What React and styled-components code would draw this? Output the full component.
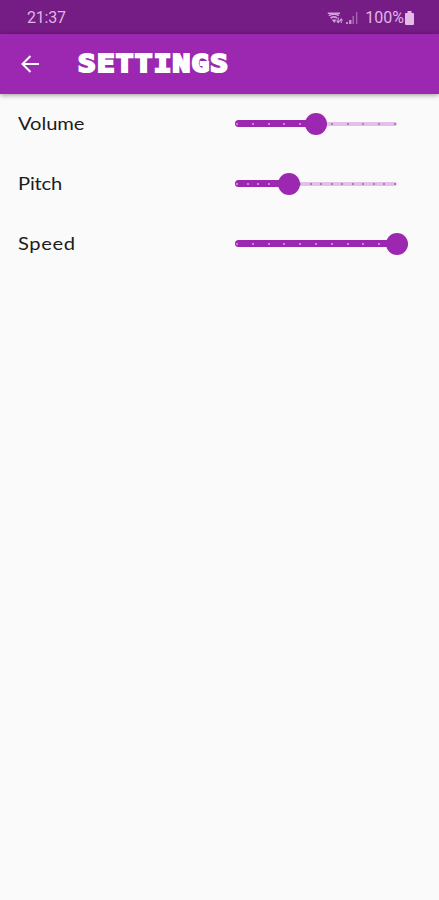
import React from 'react';
import styled, { createGlobalStyle } from 'styled-components';

const GlobalStyle = createGlobalStyle`
  body {
    margin: 0;
    background: #fafafa;
  }
`;

const Screen = styled.div`
  min-height: 900px;
  background: #fafafa;
  overflow: hidden;
`;

const StatusBar = styled.div`
  display: flex;
  justify-content: space-between;
  align-items: center;
  box-sizing: border-box;
  height: 34px;
  padding: 1px 25px 0 27px;
  background: #751c85;
  color: #dfb5e5;
  font: 16px/33px Roboto, sans-serif;
`;

const Clock = styled.span`
  letter-spacing: -0.2px;
`;

const StatusIcons = styled.div`
  display: flex;
  align-items: center;
`;

const Battery = styled.span`
  margin: 0 1px 0 6px;
`;

const AppBar = styled.header`
  display: flex;
  align-items: center;
  height: 60px;
  padding-left: 20px;
  background: #9c27b0;
  box-shadow: 0 1px 5px rgba(0, 0, 0, 0.4);
`;

const Title = styled.h1`
  margin: 0 0 0 38px;
  color: #fff;
  font: bold 24px/60px "DejaVu Sans Mono", monospace;
  letter-spacing: 1.05px;
  -webkit-text-stroke: 2.2px #fff;
  transform: scaleX(1.22);
  transform-origin: left;
`;

const List = styled.main`
  padding: 0 42px 0 18px;
`;

const Row = styled.div`
  display: flex;
  justify-content: space-between;
  align-items: center;
  height: 60px;
`;

const Label = styled.span`
  height: 60px;
  color: #1c1c1c;
  font: 18px/58px Lato, sans-serif;
  letter-spacing: ${({ $spacing }) => $spacing}px;
  transform: scaleX(1.12);
  transform-origin: left;
`;

const Slider = styled.div`
  position: relative;
  display: flex;
  align-items: center;
  width: 162px;
  height: 22px;
  margin-bottom: 1px;
`;

const Track = styled.div`
  flex: 1;
  height: 4px;
  border-radius: 2px;
  background: #e3c0e8;
`;

const ActiveTrack = styled.div`
  position: absolute;
  left: 0;
  height: 7px;
  border-radius: 4px;
  background: #9c27b0;
`;

const Ticks = styled.div`
  position: absolute;
  left: 1px;
  right: 1px;
  display: flex;
  justify-content: space-between;
`;

const Tick = styled.i`
  width: 2px;
  height: 2px;
  border-radius: 1px;
  background: ${({ $active }) => ($active ? '#d9a5e0' : '#a865b3')};
`;

const Thumb = styled.div`
  position: absolute;
  width: 22px;
  height: 22px;
  margin-left: -11px;
  border-radius: 50%;
  background: #9c27b0;
`;

const settings = [
  { label: 'Volume', value: 5, max: 10, spacing: -0.05 },
  { label: 'Pitch', value: 5, max: 15, spacing: -0.15 },
  { label: 'Speed', value: 10, max: 10, spacing: 0.55 },
];

const BackIcon = () => (
  <svg width="20" height="20" viewBox="0 0 20 20" fill="none" stroke="#fff" strokeWidth="2">
    <path d="M19 10H3M10.5 2 2.5 10l8 8" />
  </svg>
);

const WifiIcon = () => (
  <svg width="18" height="14" viewBox="0 0 18 14" fill="none" stroke="#d2a0da" strokeWidth="1.6">
    <path d="M.8 2.2H13M1.8 4.6Q7 1.6 12 4.6M3.5 7Q7 4.8 10 7" />
    <path d="M4.500 8.500 7.500 12l2-3.500z" fill="#d2a0da" stroke="none" />
    <path d="M11.200 6.500v5M9.600 9.700l1.600 2 1.600-2M14.200 12V8M12.900 9.500l1.300-1.600 1.300 1.600" strokeWidth="1.1" />
  </svg>
);

const SignalIcon = () => (
  <svg width="14" height="14" viewBox="0 0 14 14" fill="#c48dcc">
    <path d="M1 11h2v2H1zM4 9h2.500v4H4z" />
    <path d="M7.500 5h1.500v8H7.500zM11 1h1.300v12H11z" opacity=".65" />
  </svg>
);

const BatteryIcon = () => (
  <svg width="9" height="14" viewBox="0 0 9 14" fill="#e2bbe8">
    <path d="M2.500 0h4v2H8q1 0 1 1v10q0 1-1 1H1q-1 0-1-1V3q0-1 1-1h1.500z" />
  </svg>
);

const SettingSlider = ({ value, max }) => {
  const percent = `${(value / max) * 100}%`;
  return (
    <Slider>
      <Track />
      <ActiveTrack style={{ width: percent }} />
      <Ticks>
        {Array.from({ length: max + 1 }, (_, i) => (
          <Tick key={i} $active={i <= value} />
        ))}
      </Ticks>
      <Thumb style={{ left: percent }} />
    </Slider>
  );
};

const App = () => {
  return (
    <Screen>
      <GlobalStyle />
      <StatusBar>
        <Clock>21:37</Clock>
        <StatusIcons>
          <WifiIcon />
          <SignalIcon />
          <Battery>100%</Battery>
          <BatteryIcon />
        </StatusIcons>
      </StatusBar>
      <AppBar>
        <BackIcon />
        <Title>SETTINGS</Title>
      </AppBar>
      <List>
        {settings.map(({ label, value, max, spacing }) => (
          <Row key={label}>
            <Label $spacing={spacing}>{label}</Label>
            <SettingSlider value={value} max={max} />
          </Row>
        ))}
      </List>
    </Screen>
  );
};

export default App;
